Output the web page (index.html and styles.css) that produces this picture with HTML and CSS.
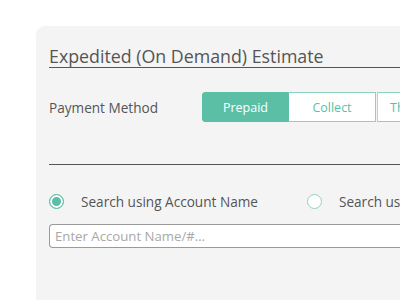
FILE: index.html
```html
<!DOCTYPE html>
<html>
<head>
<meta charset="utf-8">
<link rel="stylesheet" href="styles.css">
</head>
<body>
<div class="card">
  <h1 class="title">Expedited (On Demand) Estimate</h1>
  <div class="pay-row">
    <span class="label">Payment Method</span>
    <div class="segments">
      <span class="seg active">Prepaid</span>
      <span class="seg">Collect</span>
      <span class="seg">Third Party</span>
    </div>
  </div>
  <div class="divider"></div>
  <div class="radio-row">
    <label class="radio-opt"><span class="radio checked"></span><span>Search using Account Name</span></label>
    <label class="radio-opt second"><span class="radio"></span><span>Search using Account Number</span></label>
  </div>
  <div class="input">Enter Account Name/#…</div>
</div>
</body>
</html>
```
FILE: styles.css
```css
html, body {
  margin: 0;
  padding: 0;
  background: #ffffff;
  overflow: hidden;
}
body {
  font-family: "Open Sans", Lato, sans-serif;
  color: #555555;
}
.card {
  margin: 26px 0 0 36px;
  padding: 20px 0 0 13px;
  background: #f4f4f4;
  border-top-left-radius: 9px;
  height: 300px;
  width: 420px;
  box-sizing: border-box;
}
.title {
  margin: 0;
  font-size: 17.8px;
  font-weight: 400;
  line-height: 20px;
  padding-bottom: 1px;
  border-bottom: 1px solid #555555;
  color: #555555;
  white-space: nowrap;
}
.pay-row {
  display: flex;
  align-items: center;
  margin-top: 24px;
}
.label {
  font-size: 13.6px;
  width: 153px;
  flex: none;
  white-space: nowrap;
}
.segments {
  display: flex;
  flex: none;
}
.seg {
  box-sizing: border-box;
  height: 30px;
  width: 87px;
  display: flex;
  align-items: center;
  justify-content: center;
  font-size: 12.5px;
  color: #5bbfa6;
  background: #ffffff;
  border: 1px solid #8fd1c0;
  border-left: none;
  white-space: nowrap;
}
.seg.active {
  background: #5bbfa6;
  color: #ffffff;
  border: 1px solid #5bbfa6;
  border-radius: 3px 0 0 3px;
}
.seg:last-child {
  border-left: 1px solid #a8dccf;
  margin-left: 1px;
  justify-content: flex-start;
  padding-left: 12px;
}
.divider {
  height: 1px;
  background: #555555;
  margin-top: 42px;
}
.radio-row {
  display: flex;
  align-items: center;
  margin-top: 28px;
  font-size: 13.6px;
  height: 16px;
}
.radio-opt {
  display: flex;
  align-items: center;
  white-space: nowrap;
}
.radio-opt.second {
  margin-left: 49px;
}
.radio {
  box-sizing: border-box;
  width: 15px;
  height: 15px;
  border-radius: 50%;
  border: 1px solid #8fd1c0;
  background: #ffffff;
  margin-right: 17px;
  flex: none;
}
.radio.checked {
  background: #5bbfa6;
  box-shadow: inset 0 0 0 2px #ffffff;
  border: 1px solid #5bbfa6;
}
.input {
  margin-top: 15px;
  box-sizing: border-box;
  height: 24px;
  border: 1px solid #9a9a9a;
  border-right: none;
  border-radius: 4px 0 0 4px;
  background: #ffffff;
  font-size: 13.2px;
  color: #a8a8a8;
  padding-left: 5px;
  display: flex;
  align-items: center;
  white-space: nowrap;
}
```
